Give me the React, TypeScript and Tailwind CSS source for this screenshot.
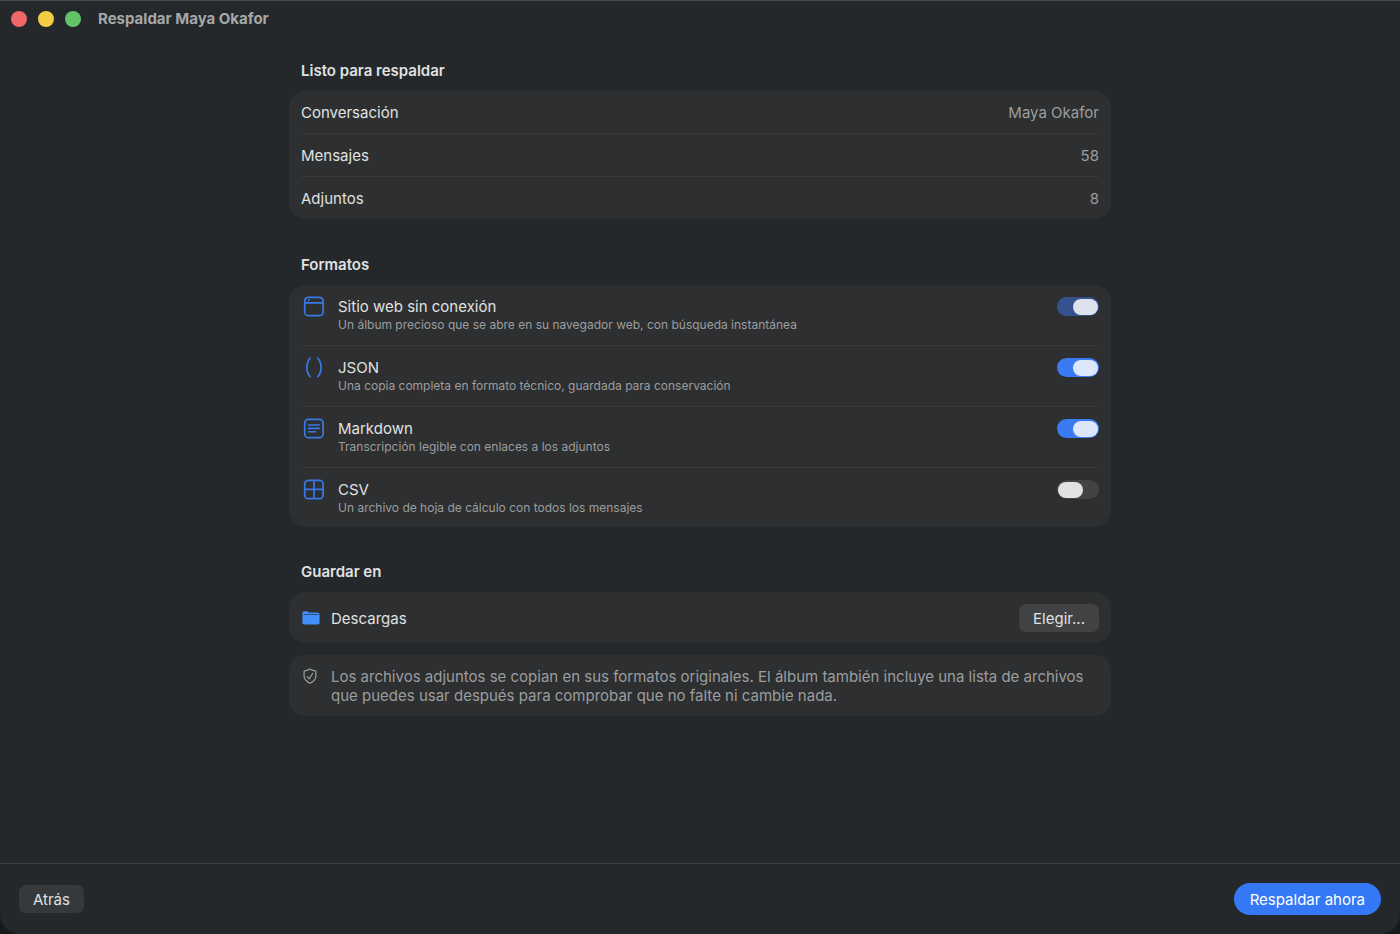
import { useState } from "react";

const summary = [
  { label: "Conversación", value: "Maya Okafor" },
  { label: "Mensajes", value: "58" },
  { label: "Adjuntos", value: "8" },
];

const formats = [
  {
    id: "web",
    title: "Sitio web sin conexión",
    detail: "Un álbum precioso que se abre en su navegador web, con búsqueda instantánea",
    locked: true,
  },
  {
    id: "json",
    title: "JSON",
    detail: "Una copia completa en formato técnico, guardada para conservación",
    locked: false,
  },
  {
    id: "markdown",
    title: "Markdown",
    detail: "Transcripción legible con enlaces a los adjuntos",
    locked: false,
  },
  {
    id: "csv",
    title: "CSV",
    detail: "Un archivo de hoja de cálculo con todos los mensajes",
    locked: false,
  },
];

function FormatIcon({ id }: { id: string }) {
  return (
    <svg
      viewBox="0 0 22 22"
      className="mt-[10px] size-[22px] shrink-0"
      fill="none"
      stroke="#3a78e8"
      strokeWidth="1.7"
      strokeLinecap="round"
      aria-hidden="true"
    >
      {id !== "json" && <rect x="1.7" y="2.3" width="18.4" height="18.4" rx="3.8" />}
      {id === "web" && (
        <>
          <path d="M2 7.9h18" />
          <circle cx="5.6" cy="5.3" r="1" fill="#3a78e8" stroke="none" />
        </>
      )}
      {id === "json" && (
        <path d="M7 2.2C2.8 7.2 2.8 15.6 7 20.6M14.9 2.2c4.2 5 4.2 13.4 0 18.4" />
      )}
      {id === "markdown" && (
        <path d="M5.5 8h10.8M5.5 11.4h10.8M5.5 14.8h7" strokeWidth="1.6" />
      )}
      {id === "csv" && <path d="M11 2.4v18M2 11.4h18" />}
    </svg>
  );
}

export default function App() {
  const [enabled, setEnabled] = useState<Record<string, boolean>>({
    web: true,
    json: true,
    markdown: true,
    csv: false,
  });

  return (
    <div className="min-h-screen bg-[#17191a]">
      <div className="flex min-h-screen flex-col rounded-b-[20px] border-t border-[#45494b] bg-[#24282b] font-['Inter','Liberation_Sans',sans-serif] text-[15px] leading-[19px] text-[#e0e1e2]">
        {/* Title bar */}
        <header className="flex h-9 shrink-0 items-center border-b border-[#222629] px-[11px]">
          <div className="flex gap-[11px]">
            <button aria-label="Cerrar" className="size-4 rounded-full bg-[#ec6765]" />
            <button aria-label="Minimizar" className="size-4 rounded-full bg-[#f3cb45]" />
            <button aria-label="Ampliar" className="size-4 rounded-full bg-[#62c466]" />
          </div>
          <h1 className="ml-[17px] font-bold text-[#a5a7a8]">Respaldar Maya Okafor</h1>
        </header>

        <main className="mx-auto w-full max-w-[822px] flex-1 pt-6">
          <section>
            <h2 className="px-3 font-semibold">Listo para respaldar</h2>
            <dl className="mt-[11px] rounded-2xl bg-[#2d2f30] px-3">
              {summary.map((item) => (
                <div
                  key={item.label}
                  className="flex h-[43px] items-center justify-between border-b border-[#383a3b] last:h-[42px] last:border-b-0"
                >
                  <dt>{item.label}</dt>
                  <dd className="text-[#9c9e9f]">{item.value}</dd>
                </div>
              ))}
            </dl>
          </section>

          <section className="mt-9">
            <h2 className="px-3 font-semibold">Formatos</h2>
            <ul className="mt-[11px] rounded-2xl bg-[#2d2f30] px-3">
              {formats.map((item) => (
                <li
                  key={item.id}
                  className="flex h-[61px] items-start border-b border-[#383a3b] pl-[2px] last:h-[59px] last:border-b-0"
                >
                  <FormatIcon id={item.id} />
                  <div className="ml-[13px] mt-3 flex-1">
                    <label htmlFor={item.id} className="block">
                      {item.title}
                    </label>
                    <p className="text-[12px] leading-[17px] text-[#9c9e9f]">{item.detail}</p>
                  </div>
                  <input
                    id={item.id}
                    type="checkbox"
                    role="switch"
                    checked={enabled[item.id]}
                    disabled={item.locked}
                    onChange={(e) => setEnabled({ ...enabled, [item.id]: e.target.checked })}
                    className="mt-3 flex h-[19px] w-[42px] shrink-0 appearance-none items-center rounded-full bg-[#414344] px-[1px] before:h-4 before:w-[25px] before:rounded-full before:bg-[#e2e2e2] checked:justify-end checked:bg-[#3a7bf4] checked:before:bg-[#dde7fc] disabled:bg-[#35528f] disabled:before:bg-[#dee2ec]"
                  />
                </li>
              ))}
            </ul>
          </section>

          <section className="mt-[35px]">
            <h2 className="px-3 font-semibold">Guardar en</h2>
            <div className="mt-[11px] flex items-center rounded-2xl bg-[#2d2f30] px-3 pt-3 pb-[11px]">
              <svg viewBox="0 0 20 16" className="h-4 w-5 shrink-0" aria-hidden="true">
                <path
                  d="M1.4 12.6V3.1c0-1.2.8-1.9 1.9-1.9h2.4c.6 0 1 .2 1.400.5l.4.3c.3.3.6.4 1.100.4h8c1.200 0 2 .8 2 2v8.200c0 1.200-.8 2-2 2H3.400c-1.200 0-2-.8-2-2z"
                  fill="#428ff7"
                />
                <path d="M3 4.500h14.200" stroke="#2a4f80" strokeWidth="1" strokeLinecap="round" />
              </svg>
              <span className="ml-[10px] flex-1">Descargas</span>
              <button className="h-7 rounded-[7px] bg-[#404243] px-[14px]">Elegir...</button>
            </div>
            <div className="mt-3 flex rounded-2xl bg-[#2d2f30] px-3 pt-3 pb-[11px] text-[#9c9e9f]">
              <svg
                viewBox="0 0 18 18"
                className="size-[18px] shrink-0"
                fill="none"
                stroke="currentColor"
                strokeWidth="1.2"
                strokeLinecap="round"
                strokeLinejoin="round"
                aria-hidden="true"
              >
                <path d="M9 2.1c1.600 1 3.500 1.500 5.200 1.700.4.1.7.4.7.8v4.300c0 3.300-2.200 5.500-5.900 7.400-3.700-1.900-5.900-4.100-5.900-7.400V4.600c0-.4.3-.7.7-.8C5.500 3.600 7.400 3.100 9 2.100z" />
                <path d="M6.3 9.7l1.900 2.2 3.400-5.400" />
              </svg>
              <p className="ml-3 flex-1">
                Los archivos adjuntos se copian en sus formatos originales. El álbum también incluye una
                lista de archivos que puedes usar después para comprobar que no falte ni cambie nada.
              </p>
            </div>
          </section>
        </main>

        <footer className="flex h-[71px] shrink-0 items-center justify-between border-t border-[#3b3f41] px-[19px]">
          <button className="h-7 rounded-[7px] bg-[#36393b] px-[14px]">Atrás</button>
          <button className="h-8 rounded-full bg-[#3478f6] px-4 text-white">Respaldar ahora</button>
        </footer>
      </div>
    </div>
  );
}
